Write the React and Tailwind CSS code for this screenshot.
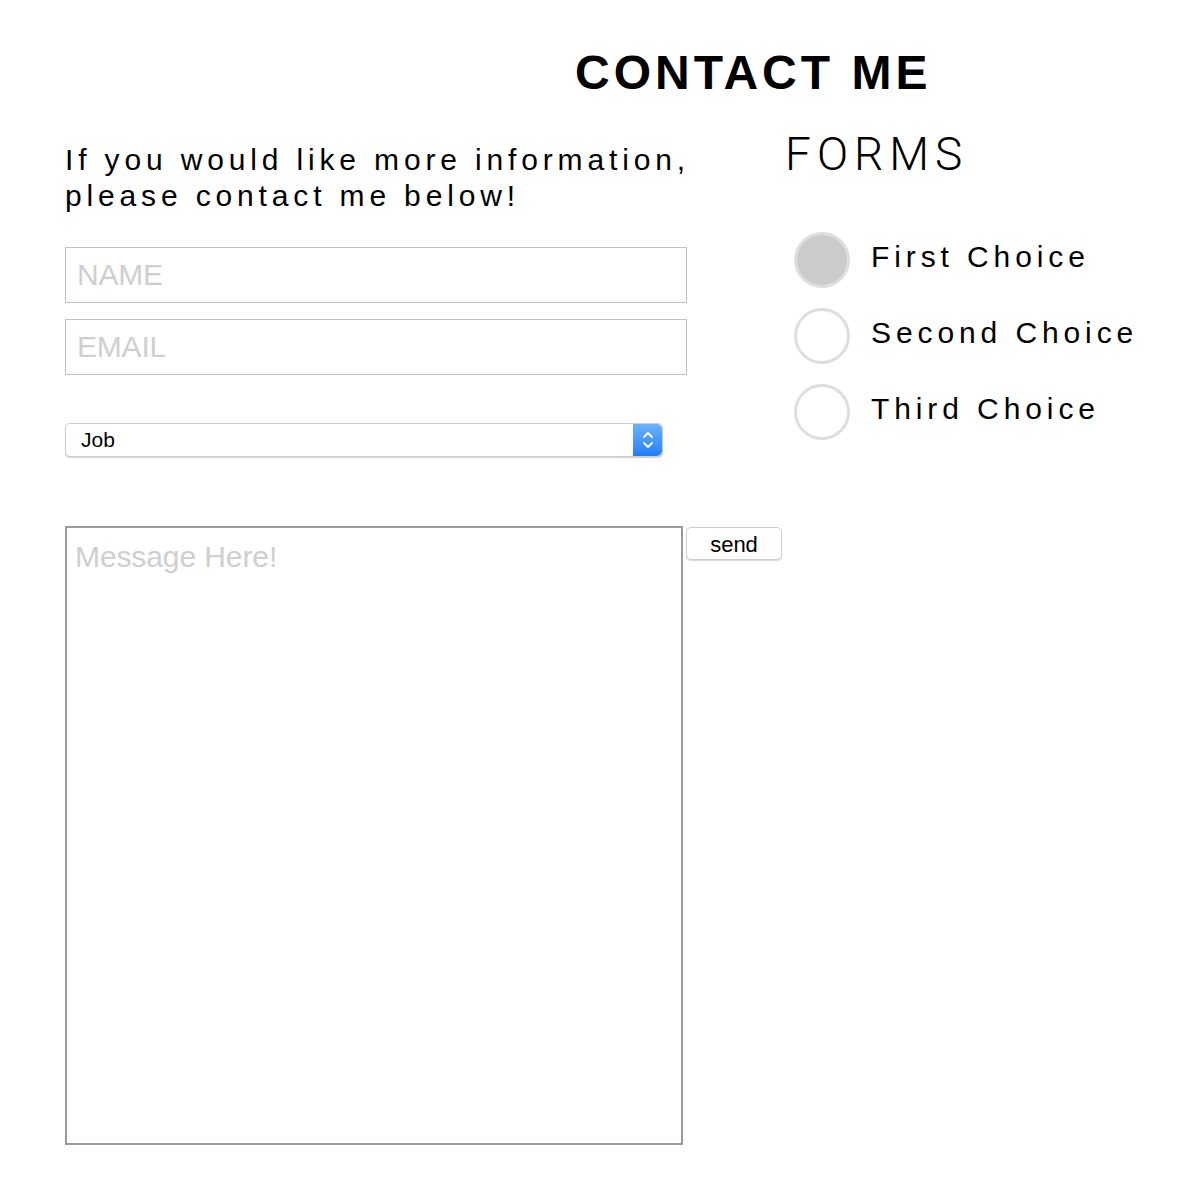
import React from "react";

const choices = ["First Choice", "Second Choice", "Third Choice"];

const Stepper = () => (
    <div className="flex w-[29px] items-center justify-center rounded-r-[5px] bg-gradient-to-b from-[#6db3fb] to-[#1b7ffa]">
        <svg width="12" height="22" viewBox="0 0 12 22" fill="none">
            <path d="M2 8 L6 4 L10 8" stroke="white" strokeWidth="1.8" strokeLinecap="round" strokeLinejoin="round" />
            <path d="M2 14 L6 18 L10 14" stroke="white" strokeWidth="1.8" strokeLinecap="round" strokeLinejoin="round" />
        </svg>
    </div>
);

const App = () => {
    return (
        <div className="min-h-[1184px] bg-white pl-[65px] font-['Liberation_Sans',Arial,sans-serif] text-black">
            <h1 className="pt-[49px] pl-[510px] text-[48px] font-bold leading-[48px] tracking-[4px]">
                CONTACT ME
            </h1>

            <div className="mt-[35px] flex gap-[98px]">
                {/* left column */}
                <div className="flex w-[622px] flex-col pt-[10px]">
                    <p className="text-[30px] leading-[36px] tracking-[4.85px] whitespace-nowrap">
                        If you would like more information,
                        <br />
                        please contact me below!
                    </p>

                    <input
                        type="text"
                        placeholder="NAME"
                        className="mt-[33px] h-[56px] w-full border border-[#c2c2c2] pl-[11px] text-[30px] tracking-[-0.2px] outline-none placeholder:text-[#cfcfcf]"
                    />
                    <input
                        type="email"
                        placeholder="EMAIL"
                        className="mt-[16px] h-[56px] w-full border border-[#c2c2c2] pl-[11px] text-[30px] tracking-[-0.2px] outline-none placeholder:text-[#cfcfcf]"
                    />

                    <div className="mt-[48px] flex h-[34px] w-[598px] rounded-[5px] border border-[#cdcdcd] bg-white shadow-[0_1px_1px_rgba(0,0,0,0.18)]">
                        <span className="flex flex-1 items-center pl-[15px] text-[21px]">Job</span>
                        <Stepper />
                    </div>
                </div>

                {/* right column */}
                <div className="flex flex-col">
                    <h2 className="font-['Roboto',sans-serif] text-[46px] font-light leading-[45px] tracking-[6px]">
                        FORMS
                    </h2>
                    <div className="mt-[55px] flex flex-col gap-[20px] pl-[9px]">
                        {choices.map((c, i) => (
                            <div key={c} className="flex h-[56px] items-center gap-[21px]">
                                <div
                                    className={
                                        i === 0
                                            ? "h-[56px] w-[56px] rounded-full border-[3px] border-[#dedede] bg-[#cbcbcb]"
                                            : "h-[56px] w-[56px] rounded-full border-[3px] border-[#dedede] bg-white"
                                    }
                                />
                                <span className="pb-[7px] text-[30px] leading-[36px] tracking-[4.9px]">{c}</span>
                            </div>
                        ))}
                    </div>
                </div>
            </div>

            <div className="mt-[69px] flex items-start gap-[3px]">
                <textarea
                    placeholder="Message Here!"
                    className="h-[619px] w-[618px] resize-none border-2 border-[#9a9a9a] px-2 pt-[6px] text-[30px] tracking-[-0.1px] outline-none placeholder:text-[#cfcfcf]"
                />
                <button className="mt-px h-[33px] w-[96px] rounded-[5px] border border-[#cdcdcd] bg-white text-[22px] shadow-[0_1px_1px_rgba(0,0,0,0.15)]">
                    send
                </button>
            </div>
        </div>
    );
};

export default App;
